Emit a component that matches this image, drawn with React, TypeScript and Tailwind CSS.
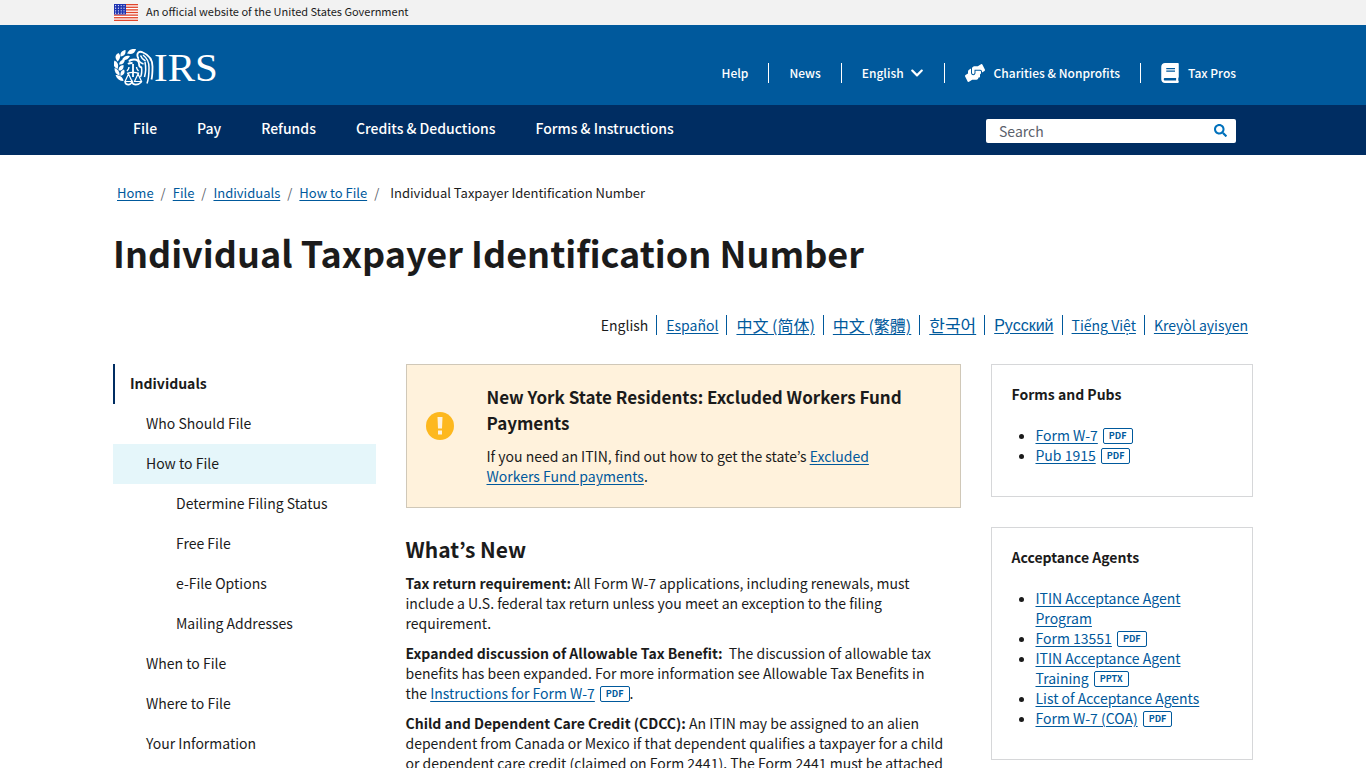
import type { ReactNode } from 'react'
import { FaBook, FaChevronDown, FaHandsHelping, FaSearch } from 'react-icons/fa'

const MAIN_NAV = ['File', 'Pay', 'Refunds', 'Credits & Deductions', 'Forms & Instructions']

const CRUMBS = ['Home', 'File', 'Individuals', 'How to File']

const LANGUAGES = [
  { label: 'Español', lang: 'es' },
  { label: '中文 (简体)', lang: 'zh-Hans', font: "font-['Noto_Sans_CJK_SC',sans-serif] text-[16px]" },
  { label: '中文 (繁體)', lang: 'zh-Hant', font: "font-['Noto_Sans_CJK_TC',sans-serif] text-[16px]" },
  { label: '한국어', lang: 'ko', font: 'text-[17px]' },
  { label: 'Русский', lang: 'ru', font: "font-['Liberation_Sans',sans-serif] text-[16px]" },
  { label: 'Tiếng Việt', lang: 'vi' },
  { label: 'Kreyòl ayisyen', lang: 'ht' },
]

const SIDE_NAV = [
  { label: 'Who Should File', level: 1 },
  { label: 'How to File', level: 1, active: true },
  { label: 'Determine Filing Status', level: 2 },
  { label: 'Free File', level: 2 },
  { label: 'e-File Options', level: 2 },
  { label: 'Mailing Addresses', level: 2 },
  { label: 'When to File', level: 1 },
  { label: 'Where to File', level: 1 },
  { label: 'Your Information', level: 1 },
]

type DocLink = { label: string; file?: string }

const FORMS: DocLink[] = [
  { label: 'Form W-7', file: 'PDF' },
  { label: 'Pub 1915', file: 'PDF' },
]

const AGENTS: DocLink[] = [
  { label: 'ITIN Acceptance Agent Program' },
  { label: 'Form 13551', file: 'PDF' },
  { label: 'ITIN Acceptance Agent Training', file: 'PPTX' },
  { label: 'List of Acceptance Agents' },
  { label: 'Form W-7 (COA)', file: 'PDF' },
]

function Container({ className = '', children }: { className?: string; children: ReactNode }) {
  return <div className={`mx-auto w-full max-w-[1140px] ${className}`}>{children}</div>
}

function Flag() {
  return (
    <svg viewBox="0 0 24 17" className="h-[17px] w-6" aria-hidden="true">
      <rect width="24" height="17" fill="#fff" />
      {[0, 1, 2, 3, 4, 5, 6].map(i => (
        <rect key={i} y={i * 2.615} width="24" height="1.31" fill="#e0442a" />
      ))}
      <rect width="12" height="10.5" fill="#1e33b1" />
      {[1.6, 4.2, 6.8, 9.2].map(y =>
        [1.6, 4.4, 7.2, 10].map(x => <circle key={`${x}-${y}`} cx={x} cy={y} r="0.6" fill="#fff" />),
      )}
    </svg>
  )
}

function EagleMark() {
  return (
    <svg viewBox="0 0 40 37" className="h-[37px] w-10" fill="none" stroke="#fff" aria-hidden="true">
      {/* laurel */}
      <g fill="#fff" stroke="none">
        <path d="M13 4.500c2-4 5-5 9-4.500c-1 4-4 6-9 4.500z" />
        <path d="M6.500 7.500c-.500-4 1.500-6 5-6.500c.500 3.500-1 6-5 6.500z" />
        <path d="M8 10.500c2-3.500 4.500-4.500 8-3.500c-2 3.500-4.500 5-8 3.500z" />
        <path d="M3.500 12.500c-3-4-2.500-6.500 1-8.500c2.500 2.500 2 5.500-1 8.500z" />
        <path d="M5 15.500c.500-3.500 2.500-5 6-5c-.500 3.500-2.500 5.500-6 5z" />
        <path d="M3.500 20c-4-2-4.500-4.500-3-8.500c3.500 2 4.500 4.500 3 8.500z" />
        <path d="M4.500 21.500c0-3.500 1.500-5 5-5.500c.500 3.500-1.500 6-5 5.500z" />
        <path d="M5.500 26.500c-3.500-1-5-3.500-5-7.500c3.500 1.500 5.500 4 5 7.500z" />
        <path d="M6.500 27c-.500-3.500 .500-5.500 3.500-6.500c1.500 3 0 5.500-3.500 6.500z" />
        <path d="M9.500 32c-4 0-6.500-2-8-6c4 0 7.500 2 8 6z" />
      </g>
      {/* head and breast */}
      <path strokeWidth="1.800" d="M14 15c1-1 3-1 4.500-1M15 12.500c1-1.500 3-2 5-2c3.500 0 5 2 5 4.500c0 2 1 3.500 3 3.500" />
      <path strokeWidth="1.500" d="M24 8c0 4 2 6 5.500 7M26.500 6.500c1 3 3 4.500 5 5.500" />
      {/* wing */}
      <path strokeWidth="1.800" d="M24 9c-2-5 1-7.500 5-5.500c6 2.500 9.500 7 9.500 14c0 7-.500 11-1 13" />
      <path strokeWidth="1.500" d="M29 6c4 3 6 7 6 12.500c0 6-.500 12-2 16" />
      <path strokeWidth="1.500" d="M31 13c1 5 1 10-.500 15M27.500 18c.500 4 0 8-1 10" />
      {/* scales */}
      <path strokeWidth="1.800" d="M19 15v13" />
      <path strokeWidth="1.400" d="M13 24.500c4-1.500 8-1.500 12 0M15 18c0 2-1 3-2 4M22.500 18c0 2 1 3 2 4" />
      <path strokeWidth="1.200" d="M14.500 25l-3.500 7.500h7zM24 25l-3.500 7.500h7z" />
      <path strokeWidth="1.600" d="M11 33c1 3.500 5.500 3.500 7 0c1 3.500 6 3.500 9.500 0" />
    </svg>
  )
}

function A({ children, lang, className = '' }: { children: ReactNode; lang?: string; className?: string }) {
  return (
    <a href="#" lang={lang} className={`text-[#00599c] underline underline-offset-2 ${className}`}>
      {children}
    </a>
  )
}

function FileTag({ type }: { type: string }) {
  return (
    <span className="ml-[5px] inline-block h-4 rounded-xs border border-[#00599c] px-[5px] align-[2px] text-[9px] leading-[14px] font-bold text-[#00599c]">
      {type}
    </span>
  )
}

function DocPanel({ title, links }: { title: string; links: DocLink[] }) {
  return (
    <section className="border border-[#d6d7d9] px-5 pt-[19px] pb-[31px]">
      <h2 className="mb-[21px] font-bold">{title}</h2>
      <ul className="list-disc pl-6">
        {links.map(l => (
          <li key={l.label}>
            <A>{l.label}</A>
            {l.file && <FileTag type={l.file} />}
          </li>
        ))}
      </ul>
    </section>
  )
}

function Header() {
  return (
    <header>
      <div className="bg-[#f2f2f2]">
        <Container className="flex h-[25px] items-center gap-2 pl-px text-[11px]">
          <Flag />
          <span className="pb-1">An official website of the United States Government</span>
        </Container>
      </div>

      <div className="bg-[#00599c] text-white">
        <Container className="flex h-20 items-center justify-between pr-[17px] pl-px">
          <a href="#" aria-label="IRS home" className="flex items-center pt-1">
            <EagleMark />
            <span className="font-['Liberation_Serif',serif] text-[41px] leading-9">IRS</span>
          </a>
          <nav className="flex items-center pt-4 text-[12px] leading-5 font-medium">
            <a href="#" className="pr-5">Help</a>
            <a href="#" className="border-l border-white px-5">News</a>
            <button className="flex items-center gap-[6px] border-l border-white px-5">
              English <FaChevronDown size={14} />
            </button>
            <a href="#" className="flex items-center gap-[9px] border-l border-white px-5">
              <FaHandsHelping className="h-[18px] w-5" preserveAspectRatio="none" /> Charities &amp; Nonprofits
            </a>
            <a href="#" className="flex items-center gap-2 border-l border-white pl-[19px]">
              <FaBook size={20} /> Tax Pros
            </a>
          </nav>
        </Container>
      </div>

      <div className="bg-[#002d62] text-white">
        <Container className="flex h-[50px] items-center justify-between pr-[17px] pl-5">
          <nav className="flex gap-10 pb-1 text-[14px] font-medium">
            {MAIN_NAV.map(item => (
              <a key={item} href="#">{item}</a>
            ))}
          </nav>
          <form className="mt-[2px] flex h-6 w-[250px] items-center rounded-xs bg-white px-[9px] pb-px" onSubmit={e => e.preventDefault()}>
            <input
              type="text"
              aria-label="Search"
              placeholder="Search"
              className="w-full min-w-0 px-1 text-[14px] leading-5 text-[#1b1b1b] placeholder:text-[#5b616b] focus:outline-none"
            />
            <button aria-label="Submit search" className="text-[#0071bc]">
              <FaSearch size={13} />
            </button>
          </form>
        </Container>
      </div>
    </header>
  )
}

export default function App() {
  return (
    <div className="h-screen overflow-hidden bg-white font-['Noto_Sans_CJK_KR','Noto_Sans_CJK_SC',sans-serif] text-[14px] leading-5 text-[#1b1b1b]">
      <Header />

      <Container>
        <nav aria-label="Breadcrumb" className="flex px-1 pt-7 text-[13px]">
          {CRUMBS.map(c => (
            <span key={c}>
              <A>{c}</A>
              <span className="px-[7px] text-[#5b616b]">/</span>
            </span>
          ))}
          <span className="pl-1">Individual Taxpayer Identification Number</span>
        </nav>

        <h1 className="pt-[25px] text-[36px] leading-[48px] font-bold">Individual Taxpayer Identification Number</h1>

        <ul className="flex justify-end pt-[39px] pr-[5px]">
          <li className="pr-2">English</li>
          {LANGUAGES.map(l => (
            <li key={l.lang} className="h-5 border-l border-[#00599c] pr-2 pl-[9px] last:pr-0">
              <A lang={l.lang} className={l.font}>{l.label}</A>
            </li>
          ))}
        </ul>

        <div className="grid grid-cols-4 items-start gap-[30px] pt-[29px]">
          <nav aria-label="Individuals">
            <a href="#" className="block border-l-2 border-[#002d62] pt-[9px] pb-[11px] pl-[15px] font-bold">Individuals</a>
            {SIDE_NAV.map(n => (
              <a
                key={n.label}
                href="#"
                className={`block pt-[9px] pb-[11px] ${n.level === 2 ? 'pl-[63px]' : 'pl-[33px]'} ${n.active ? 'bg-[#e5f6fa]' : ''}`}
              >
                {n.label}
              </a>
            ))}
          </nav>

          <main className="col-span-2">
            <aside className="flex items-start border border-[#d0c8b8] bg-[#fff2dc] pt-[19px] pr-5 pb-[21px] pl-[19px]">
              <svg viewBox="0 0 28 28" className="mt-7 mr-[33px] h-7 w-7 shrink-0" aria-hidden="true">
                <circle cx="14" cy="14" r="14" fill="#fdb81e" />
                <path d="M11.500 5h5l-.500 11.500h-4zM12 18.500h4v4h-4z" fill="#fff2dc" />
              </svg>
              <div>
                <h3 className="text-[17px] leading-[26px] font-bold">
                  New York State Residents: Excluded Workers Fund Payments
                </h3>
                <p className="pt-[10px] pr-10">
                  If you need an ITIN, find out how to get the state’s <A>Excluded Workers Fund payments</A>.
                </p>
              </div>
            </aside>

            <h2 className="pt-[27px] text-[21px] leading-7 font-bold">What’s New</h2>
            <div className="pr-[14px]">
              <p className="pt-[10px]">
                <b>Tax return requirement:</b> All Form W-7 applications, including renewals, must include a U.S. federal
                tax return unless you meet an exception to the filing requirement.
              </p>
              <p className="pt-[10px]">
                <b>Expanded discussion of Allowable Tax Benefit:</b>&nbsp; The discussion of allowable tax benefits has
                been expanded. For more information see Allowable Tax Benefits in the{' '}
                <A>Instructions for Form W-7</A>
                <FileTag type="PDF" />.
              </p>
              <p className="pt-[10px]">
                <b>Child and Dependent Care Credit (CDCC):</b> An ITIN may be assigned to an alien dependent from Canada
                or Mexico if that dependent qualifies a taxpayer for a child or dependent care credit (claimed on Form
                2441). The Form 2441 must be attached
              </p>
            </div>
          </main>

          <div className="flex flex-col gap-[30px]">
            <DocPanel title="Forms and Pubs" links={FORMS} />
            <DocPanel title="Acceptance Agents" links={AGENTS} />
          </div>
        </div>
      </Container>
    </div>
  )
}
